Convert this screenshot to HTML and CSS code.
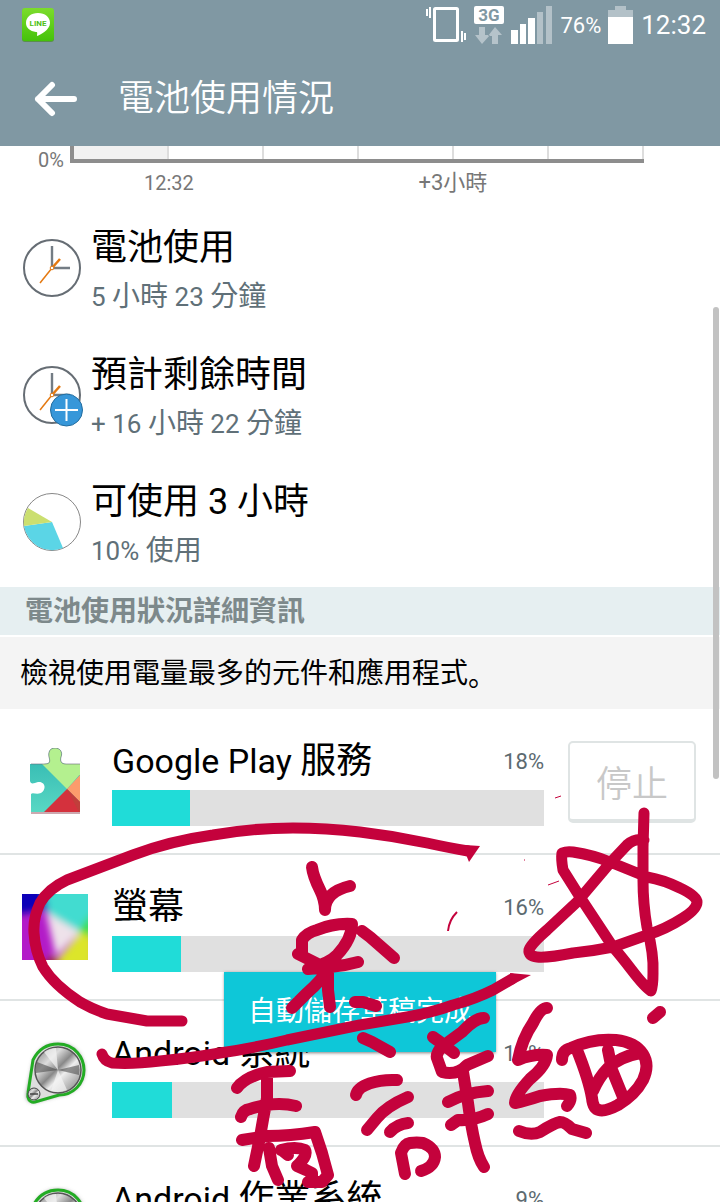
FILE: index.html
```html
<!DOCTYPE html>
<html lang="zh-Hant">
<head>
<meta charset="utf-8">
<meta name="viewport" content="width=device-width, initial-scale=1">
<title>電池使用情況</title>
<link rel="stylesheet" href="styles.css">
</head>
<body>
<div class="screen">
  <header class="top">
    <div class="status">
      <svg class="line-logo" width="34" height="34" viewBox="0 0 34 34" role="img" aria-label="LINE">
        <defs><linearGradient id="lg" x2="0" y2="1"><stop offset="0" stop-color="#7cdc2c"/><stop offset="1" stop-color="#45c20a"/></linearGradient></defs>
        <rect x="1" y="1" width="32" height="33" rx="3" fill="#5a8f4c"/>
        <rect x="1" y="0" width="32" height="33" rx="3" fill="url(#lg)"/>
        <path d="M17 5c-7 0-12 4-12 10 0 5 4 8 10 9 2 0 1 2 1 4 3-1 13-6 13-13 0-6-5-10-12-10z" fill="#fff"/>
        <text x="17" y="18" class="logo-text" text-anchor="middle">LINE</text>
      </svg>
      <div class="status-right">
        <svg width="42" height="38" viewBox="0 0 42 38" fill="none" stroke="#fff">
          <rect x="9.500" y="2.500" width="23" height="32" rx="1" stroke-width="3"/>
          <path d="M5 1v11M2 3v7M37 25v11M40 27v7" stroke-width="2"/>
        </svg>
        <svg width="30" height="38" viewBox="0 0 30 38">
          <rect width="30" height="18" rx="2" fill="#fff"/>
          <text x="15" y="15" class="net-text" text-anchor="middle">3G</text>
          <path d="M5 21h6v8h5l-8 9-7-9h4zM18 38h6v-9h4l-7-8-7 9h4z" fill="#b5c3ca"/>
        </svg>
        <svg width="42" height="38" viewBox="0 0 42 38">
          <path d="M0 24h7v14H0zM9 18h6v20H9zM17 12h7v26h-7z" fill="#fff"/>
          <path d="M26 6h6v32h-6zM35 0h6v38h-6z" fill="#b3c1c8"/>
        </svg>
        <span class="level">76%</span>
        <svg width="26" height="38" viewBox="0 0 26 38">
          <path d="M0 4h7V0h11v4h7v8H0z" fill="#b3c1c8"/><path d="M0 11h25v27H0z" fill="#fff"/>
        </svg>
        <span class="clock">12:32</span>
      </div>
    </div>
    <div class="appbar">
      <button class="back" aria-label="返回">
        <svg width="44" height="36" viewBox="0 0 44 36" fill="none" stroke="#fff" stroke-width="6" stroke-linecap="round" stroke-linejoin="round"><path d="M18 4L4 18l14 14M4 18h36"/></svg>
      </button>
      <h1>電池使用情況</h1>
    </div>
  </header>

  <main class="content">
    <section class="chart">
      <span class="zero">0%</span>
      <div class="plot"><i></i><i></i><i></i><i></i><i></i><i></i></div>
      <div class="axis"><span>12:32</span><span>+3小時</span></div>
    </section>

    <section class="stats">
      <div class="stat">
        <svg class="stat-icon" width="62" height="62" viewBox="0 0 62 62" fill="none">
          <g id="clock"><circle cx="29" cy="29" r="28" fill="#fff" stroke="#666d74" stroke-width="2"/>
          <path d="M29 7v22h18" stroke="#737c84" stroke-width="2.400"/>
          <path d="M17 44L29 29" stroke="#e47911" stroke-width="1.500"/><path d="M29 29l8-9" stroke="#e47911" stroke-width="2.500"/><circle cx="29" cy="29" r="1.800" fill="#fff" stroke="#e47911"/></g>
        </svg>
        <div><h2>電池使用</h2><p><span class="num">5 </span>小時<span class="num"> 23 </span>分鐘</p></div>
      </div>
      <div class="stat">
        <svg class="stat-icon" width="62" height="62" viewBox="0 0 62 62" fill="none">
          <use href="#clock"/>
          <circle cx="43.500" cy="44" r="16" fill="#3797d9" stroke="#236d9f"/><path d="M32 44h23M43.500 33v22" stroke="#fff" stroke-width="2"/>
        </svg>
        <div><h2>預計剩餘時間</h2><p><span class="num">+ 16 </span>小時<span class="num"> 22 </span>分鐘</p></div>
      </div>
      <div class="stat">
        <svg class="stat-icon" width="62" height="62" viewBox="0 0 62 62">
          <circle cx="29" cy="29" r="28.500" fill="#fff" stroke="#888"/>
          <path d="M29 29L1 33a28.500 28.500 0 0 0 39 22z" fill="#5bd5e6"/><path d="M29 29L1 33a28 28 0 0 1 4-18z" fill="#cbdf70"/>
        </svg>
        <div><h2>可使用 3 小時</h2><p><span class="num">10% </span>使用</p></div>
      </div>
    </section>

    <h3 class="section-title">電池使用狀況詳細資訊</h3>
    <p class="hint">檢視使用電量最多的元件和應用程式<span lang="ja">。</span></p>

    <ul class="apps">
      <li class="app">
        <svg class="app-icon" width="66" height="66" viewBox="0 0 66 66">
          <defs><linearGradient id="teal" x2="0" y2="1"><stop stop-color="#2fb5b0"/><stop offset="1" stop-color="#5ad9c4"/></linearGradient>
          <clipPath id="piece"><path d="M8 16h14c7 0 6-3 5-7-1-5 1-9 6-9s8 4 6 9c-1 4 0 7 5 7h14v48H9V46c2-2 5 1 10-1 6-4 4-12-3-11-4 1-7 3-8-1z"/></clipPath></defs>
          <path d="M9 65h49" stroke="#9a5360"/>
          <g clip-path="url(#piece)"><path d="M0 0h66v66H0z" fill="url(#teal)"/><path d="M20 16L19 0h47v17L45 41z" fill="#b4f08f"/><path d="M58 27v27L45 41z" fill="#fc9c6c"/><path d="M45 41l25 25H20z" fill="#d4313d"/><path d="M45 41l13 13v12z" fill="#c13e3b"/></g>
          <path d="M9 16h13c7 0 6-3 5-7-1-5 1-9 6-9s8 4 6 9c-1 4 0 7 5 7h14" fill="none" stroke="#667" stroke-width=".6"/>
        </svg>
        <div class="info">
          <div class="row"><span class="name"><span class="latin">Google Play </span>服務</span><span class="pct">18%</span></div>
          <div class="bar"><div class="fill" style="width:18%"></div></div>
        </div>
        <button class="stop" disabled>停止</button>
      </li>
      <li class="app">
        <svg class="app-icon" width="66" height="66" viewBox="0 0 66 66">
          <defs><filter id="soft" x="-.2" y="-.2" width="1.400" height="1.400"><feGaussianBlur stdDeviation="3.500"/></filter><clipPath id="sq"><path d="M0 0h66v66H0z"/></clipPath></defs>
          <g clip-path="url(#sq)"><path d="M0 0h66v66H0z" fill="#b31bc8"/><g filter="url(#soft)"><path d="M-9-9h38v24L-9 21z" fill="#1006b8"/><path d="M22-9h60v50H58L26 22z" fill="#42dcd0"/><path d="M55 40l15-22v30z" fill="#3fdf28"/><path d="M58 38l14 6v30H28z" fill="#dce52c"/><path d="M24 18l34 20-24 24z" fill="#eee2ea"/><path d="M20 72l10-12 12 14z" fill="#9c2440"/></g></g>
        </svg>
        <div class="info">
          <div class="row"><span class="name">螢幕</span><span class="pct">16%</span></div>
          <div class="bar"><div class="fill" style="width:16%"></div></div>
        </div>
      </li>
      <li class="app">
        <svg class="app-icon" width="66" height="66" viewBox="0 0 66 66">
          <defs>
            <linearGradient id="metal" x2="1" y2="1"><stop stop-color="#777"/><stop offset=".3" stop-color="#ddd"/><stop offset=".48" stop-color="#888"/><stop offset=".6" stop-color="#eee"/><stop offset="1" stop-color="#777"/></linearGradient>
            <filter id="shade" x="-.2" y="-.2" width="1.400" height="1.400"><feGaussianBlur stdDeviation="2"/></filter>
            <g id="dial"><path d="M12 20C18 8 26 4 36 4c18 0 26 14 26 26 0 14-11 24-25 25l-25 7c-6 0-8-4-7-9z" fill="#777" filter="url(#shade)"/>
            <path d="M11 20C17 8 26 4 36 4c17 0 26 14 26 26 0 14-11 25-25 25l-24 7c-6 1-8-4-7-9z" fill="#dedede" stroke="#23ac24" stroke-width="3"/>
            <circle cx="36" cy="30" r="23" fill="url(#metal)" stroke="#555" stroke-width="1.500"/>
            <path d="M36 30L15 22a22 22 0 0 0-1 11zM36 30l21-5a22 22 0 0 1 0 10z" fill="#444" opacity=".55"/><path d="M36 30L22 12a22 22 0 0 1 12-4zM36 30l-7 21a22 22 0 0 0 16-1z" fill="#f5f5f5" opacity=".7"/>
            <circle cx="12" cy="54" r="6" fill="url(#metal)" stroke="#444"/><path d="M8 54h8" stroke="#444" stroke-width="1.500"/></g>
          </defs>
          <use href="#dial"/>
        </svg>
        <div class="info">
          <div class="row"><span class="name"><span class="latin">Android </span>系統</span><span class="pct">14%</span></div>
          <div class="bar"><div class="fill" style="width:14%"></div></div>
        </div>
      </li>
      <li class="app">
        <svg class="app-icon" width="66" height="66" viewBox="0 0 66 66"><use href="#dial"/></svg>
        <div class="info">
          <div class="row"><span class="name"><span class="latin">Android </span>作業系統</span><span class="pct">9%</span></div>
          <div class="bar"><div class="fill" style="width:9%"></div></div>
        </div>
      </li>
    </ul>
  </main>

  <div class="scroll-thumb"></div>
  <div class="toast" role="status">自動儲存草稿完成</div>

  <svg class="ink" width="720" height="1202" viewBox="0 0 720 1202" aria-hidden="true">
    <g fill="none" stroke="#c4023c" stroke-width="12" stroke-linecap="round" stroke-linejoin="round">
      <path stroke-width="11" d="M468 851Q450 848 427 843Q394 836 360 832Q326 828 293 828Q252 828 213 835Q170 841 133 855Q99 868 67 880Q48 889 40 903Q33 918 34 933Q35 951 43 967Q54 985 80 1002Q92 1009 107 1014L147 1021H182"/>
      <path stroke-width="11" d="M102 1054Q104 1061 112 1063C127 1064 144 1063 160 1061Q192 1058 220 1053Q254 1048 287 1040L360 1025L407 1017Q431 1013 453 1005Q475 999 493 990L512 979"/>
      <path d="M312 867Q313 876 320 890Q325 900 325 910Q325 892 350 886"/>
      <path d="M298 954L320 965M302 953V940Q306 933 317 930Q333 923 352 924Q352 939 337 955Q330 963 308 969Q320 968 330 967Q344 966 358 962M330 967Q321 981 307 993L292 1008M328 973V990L330 1007M362 931L370 937L394 958M355 1002L363 1002L376 1006M363 1038L372 1042L390 1052"/>
      <path stroke-width="11" d="M644 813L643 847V880Q643 904 647 927Q654 955 653 973Q653 986 651 991C640 984 631 967 613 947L580 897L563 870Q561 859 562 853Q567 851 573 852Q593 855 610 862L647 877Q664 880 680 888Q697 896 697 902Q697 909 683 918Q666 929 647 935L613 947Q593 951 573 953Q548 958 537 957Q528 956 529 950Q531 944 547 930L577 902L610 863L627 845Q635 838 644 840"/>
      <path d="M290 1071L267 1072Q245 1077 237 1088M267 1072V1098Q263 1119 260 1137L254 1166M241 1117Q243 1110 250 1109Q275 1101 296 1106M242 1140L267 1136Q290 1136 315 1132L322 1153L328 1175L322 1182H308M269 1148L272 1166L278 1180M281 1150Q296 1146 305 1150Q308 1156 297 1166L306 1170L312 1173V1181M283 1151L288 1155"/>
      <path d="M397 1080C377 1079 358 1085 356 1095M408 1097Q387 1106 377 1118L367 1130M408 1123Q397 1124 390 1132M405 1174L401 1153Q404 1144 410 1143Q417 1142 423 1143C432 1147 435 1151 435 1157Q434 1167 421 1171"/>
      <path d="M433 1037L440 1042L454 1053M484 1018C475 1018 468 1026 462 1032L447 1043C438 1048 436 1056 437 1058L442 1072Q457 1076 467 1065L488 1056M463 1072L468 1103Q471 1126 475 1143Q478 1158 484 1167M448 1102Q464 1093 488 1091M451 1125L458 1120Q473 1121 488 1114"/>
      <path d="M547 1008C541 1008 536 1017 533 1023Q522 1039 518 1060Q532 1054 547 1055Q546 1066 530 1079Q515 1095 515 1103Q525 1101 540 1096Q561 1092 570 1095Q572 1100 567 1106M519 1131Q531 1136 540 1132Q554 1123 560 1122Q565 1122 572 1129L586 1133"/>
      <path d="M562 1060Q562 1050 571 1048Q593 1038 616 1040Q635 1042 643 1054Q650 1065 643 1080Q635 1095 618 1105Q605 1112 599 1110Q593 1109 592 1098Q589 1080 577 1050M608 1050L612 1070L623 1097M640 1053Q619 1057 608 1068Q599 1077 593 1091M660 1012L653 1018"/>
    </g>
    <path d="M465 845l15 1-11 16-4-10zM510 973l21 2-19 10z" fill="#c4023c"/>
    <path d="M555 798l6-2M548 885l11-4M524 860h1" fill="none" stroke="#c4023c" stroke-width="1"/>
    <path d="M457 912q-8 8-9 19" fill="none" stroke="#c4023c" stroke-width="2"/>
  </svg>
</div>
</body>
</html>
```

FILE: styles.css
```css
* { box-sizing: border-box; }

body {
  margin: 0;
  background: #fff;
  color: #000;
  font-family: Roboto, "Noto Sans CJK TC", sans-serif;
}

h1, h2, h3, p, ul { margin: 0; padding: 0; font-weight: 400; }
button { font: inherit; }
svg { display: block; flex: none; }
:lang(ja) { font-family: "Noto Sans CJK JP", sans-serif; }

.screen {
  position: relative;
  display: flex;
  flex-direction: column;
  height: 100vh;
  overflow: hidden;
}

.top { flex: none; background: #8098a3; color: #fff; }

.status {
  display: flex;
  justify-content: space-between;
  align-items: center;
  height: 50px;
  padding: 0 14px 0 21px;
}
.logo-text { font: 700 8px Roboto, sans-serif; fill: #4dbf15; }
.net-text { font: 700 17px Roboto, sans-serif; fill: #8098a3; }
.status-right { display: flex; align-items: center; gap: 7px; }
.level { font-size: 22px; }
.clock { font-size: 26px; }

.appbar { display: flex; align-items: center; gap: 40px; height: 96px; padding: 1px 0 0 34px; }
.back { padding: 0; border: 0; background: none; color: inherit; }
.appbar h1 { font-size: 36px; line-height: 48px; font-weight: 350; }

.content { flex: 1; min-height: 0; overflow: hidden; }

.chart {
  display: grid;
  grid-template-columns: 70px 1fr;
  grid-template-rows: 23px 1fr;
  padding-right: 76px;
  height: 59px;
  color: #777;
}
.zero { padding-right: 6px; text-align: right; font-size: 20px; line-height: 28px; }
.plot {
  display: grid;
  grid-template-columns: repeat(6, 1fr);
  height: 17px;
  border-left: 4px solid #8d8d8d;
  border-bottom: 4px solid #8d8d8d;
}
.plot i { border-right: 2px solid #ddd; }
.plot i:first-child { background: #f1f1f1; }
.axis {
  grid-column: 2;
  display: grid;
  grid-template-columns: repeat(2, 1fr);
  padding-right: 5px;
  font-size: 22px;
  line-height: 28px;
}
.axis span:first-child { padding-left: 74px; font-size: 20px; }
.axis span:last-child { padding-left: 64px; }

.stat { display: flex; gap: 6px; height: 127px; padding: 18px 23px 0; }
.stat-icon { margin-top: 16px; }
.stat h2 { font-size: 36px; line-height: 50px; }
.stat p { color: #607078; font-size: 28px; line-height: 48px; }
.num { font-size: 26px; white-space: pre; }

.section-title {
  margin: 1px 0 2px;
  padding: 2px 25px 0;
  background: #e6eff1;
  color: #7d898b;
  font-size: 28px;
  line-height: 46px;
  font-weight: 700;
}
.hint { display: flex; padding: 2px 20px 0; background: #f4f4f4; font-size: 28px; line-height: 70px; }

.apps { list-style: none; }
.app {
  display: grid;
  grid-template-columns: 66px 1fr 128px;
  column-gap: 24px;
  height: 146px;
  padding: 30px 24px 0 22px;
  border-bottom: 2px solid #e0e4e4;
}
.app-icon { margin-top: 9px; }
.row { display: flex; justify-content: space-between; align-items: center; height: 44px; }
.name { font-size: 36px; line-height: 44px; white-space: pre; }
.latin { font-size: 34px; }
.pct { color: #5c6a70; font-size: 22px; }
.bar { height: 36px; margin-top: 7px; background: #e0e0e0; }
.fill { height: 100%; background: #20dcd8; }

.stop {
  height: 82px;
  margin-top: 2px;
  padding: 0;
  border: 2px solid #dfe4e4;
  border-bottom-width: 4px;
  border-radius: 5px;
  background: #fff;
  color: #c8c8c8;
  font-size: 36px;
  font-weight: 350;
}

.scroll-thumb {
  position: absolute;
  top: 307px;
  right: 1px;
  width: 6px;
  height: 472px;
  border-radius: 3px;
  background: #c2c2c2;
}

.toast {
  position: absolute;
  left: 50%;
  bottom: 150px;
  transform: translateX(-50%);
  padding: 0 24px;
  background: #0ec7d8;
  box-shadow: 0 1px 3px rgba(0, 0, 0, .5);
  color: #fff;
  font-size: 28px;
  line-height: 80px;
  white-space: nowrap;
}

.ink { position: absolute; top: 0; left: 0; pointer-events: none; }
```
